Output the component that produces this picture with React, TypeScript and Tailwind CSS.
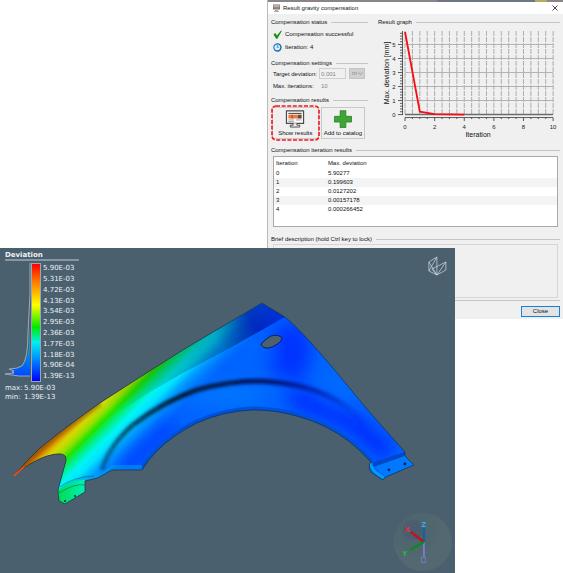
import type { ReactNode } from "react";

const ITERATIONS = [
  { iteration: 0, deviation: "5.90277" },
  { iteration: 1, deviation: "0.199603" },
  { iteration: 2, deviation: "0.0127202" },
  { iteration: 3, deviation: "0.00157178" },
  { iteration: 4, deviation: "0.000266452" },
];

const SCALE_LABELS = [
  "5.90E-03",
  "5.31E-03",
  "4.72E-03",
  "4.13E-03",
  "3.54E-03",
  "2.95E-03",
  "2.36E-03",
  "1.77E-03",
  "1.18E-03",
  "5.90E-04",
  "1.39E-13",
];

const FENDER =
  "M14 476 Q26 461 40 448 Q66 427 100 403 Q140 377 183 350 L262 303 L285 317 Q301 330 333 368 L367 409 L405 452 L405 456 L414 465 L386 477 L383 480 L372 473 Q367 467 371 462 Q360 450 350 442 Q326 424 300 417 Q277 410 253 410 Q224 411 197 423 Q173 435 157 451 Q148 460 142 470 L112 470 L98 478 L85 481 L85 492 L65 504 L59 501 L58 490 L66 461 Q67 455 61 454 Q49 453 30 464 Q21 470 14 476Z";

const ARCH =
  "M371 463 Q360 450 350 442 Q326 424 300 417 Q277 410 253 410 Q224 411 197 423 Q173 435 157 451 Q148 460 142 470";

function SectionTitle({ children }: { children: ReactNode }) {
  return (
    <div className="flex h-[10px] items-center gap-1">
      <h2 className="leading-[10px]">{children}</h2>
      <span className="h-px flex-1 bg-[#c4c4c4]" />
    </div>
  );
}

function ResultGraph() {
  const x = (v: number) => 405 + v * 14.8;
  const y = (v: number) => 114.5 - v * 14;
  const halves = Array.from({ length: 21 }, (_, i) => i / 2);

  return (
    <svg
      viewBox="378 27 182 112"
      className="w-full"
      role="img"
      aria-label="Max. deviation by iteration"
    >
      {halves.map((v) => (
        <path key={v} d={`M${x(v)} 31V114`} stroke="#adadad" strokeWidth="1" strokeDasharray="5 1" />
      ))}
      {[1, 2, 3, 4, 5].map((v) => (
        <path key={v} d={`M405 ${y(v)}H553`} stroke="#b4b4b4" strokeWidth="1" />
      ))}
      <path d="M405 114.5H553" stroke="#6c6c6c" strokeWidth="1.4" />
      <path d="M402.5 31V115M405 117.5H553" stroke="#333" strokeWidth=".8" />
      {Array.from({ length: 30 }, (_, i) => (
        <path
          key={i}
          d={`M${i % 5 === 0 ? 398 : 400} ${y(i / 5)}H402.5`}
          stroke="#333"
          strokeWidth=".8"
        />
      ))}
      {halves.map((v) => (
        <path
          key={v}
          d={`M${x(v)} 117.5V${v % 2 === 0 ? 121 : 119}`}
          stroke="#333"
          strokeWidth=".8"
        />
      ))}
      <polyline
        points={`405,32 ${x(1)},111.7 ${x(2)},114 ${x(4)},114.5`}
        fill="none"
        stroke="#f80c12"
        strokeWidth="1.8"
      />
      <g fill="#222" fontSize="6" textAnchor="middle">
        {[0, 1, 2, 3, 4, 5].map((v) => (
          <text key={v} x="394" y={y(v) + 2}>
            {v}
          </text>
        ))}
        {[0, 2, 4, 6, 8, 10].map((v) => (
          <text key={v} x={x(v)} y="129">
            {v}
          </text>
        ))}
      </g>
      <g fill="#111" fontSize="7" textAnchor="middle">
        <text x="478" y="137">
          Iteration
        </text>
        <text transform="translate(389 73) rotate(-90)">Max. deviation [mm]</text>
      </g>
    </svg>
  );
}

function CompensationDialog() {
  return (
    <section className="ml-auto w-[52.6%] border-l border-[#b9b9b9] bg-[#f0f0f0] font-['Liberation_Sans',sans-serif] text-[6px] leading-[10px] text-[#111]">
      <div className="flex h-[2px] bg-[#8b8585]">
        <span className="ml-auto w-1/3 bg-[#6f7684]" />
        <span className="mr-4 w-3 bg-[#b5aa62]" />
      </div>
      <header className="flex h-3 items-center bg-white pr-[5px] pl-1">
        <svg viewBox="0 0 9 9" className="mr-[2px] size-[9px]">
          <path d="M1 .5h7v5H1z" fill="#797979" />
          <path d="M1.5 1.5h6v1h-6z" fill="#e8e8e8" />
          <path d="M2 3h5v1.5H2z" fill="#b98167" />
          <path d="M3 6h3v1h1v1H2V7h1z" fill="#aaa" />
        </svg>
        <h1 className="leading-3">Result gravity compensation</h1>
        <button type="button" aria-label="Close window" className="ml-auto">
          <svg viewBox="0 0 6 6" className="size-[6px]">
            <path d="M.5.5l5 5M5.5.5l-5 5" stroke="#333" strokeWidth=".9" />
          </svg>
        </button>
      </header>

      <div className="px-[3px] pt-[3px] pb-[2px]">
        <div className="flex gap-[10px]">
          <div className="flex w-[97px] shrink-0 flex-col">
            <SectionTitle>Compensation status</SectionTitle>
            <div className="mt-[2px] flex h-[10px] items-center gap-[3px] pl-[2px]">
              <svg viewBox="0 0 9 9" className="size-[9px]">
                <path d="M.5 4.5L2.2 3 4 5.5 8 .5l.8.5L4.3 8.7H3.2z" fill="#169016" />
              </svg>
              Compensation successful
            </div>
            <div className="mt-[3px] flex h-[10px] items-center gap-[3px] pl-[2px]">
              <svg viewBox="0 0 9 9" className="size-[9px]">
                <circle cx="4.5" cy="4.5" r="4.2" fill="#1b6fb5" />
                <circle cx="4.3" cy="4.3" r="2.9" fill="#d9effc" />
                <path d="M4.3 2v2.5L6 4" fill="none" stroke="#2a7dbd" strokeWidth=".8" />
              </svg>
              Iteration: 4
            </div>

            <div className="mt-[6px]">
              <SectionTitle>Compensation settings</SectionTitle>
            </div>
            <div className="flex h-[11px] items-center pl-[2px]">
              <label htmlFor="target" className="w-[46px] whitespace-nowrap">
                Target deviation:
              </label>
              <input
                id="target"
                disabled
                defaultValue="0.001"
                className="h-[11px] w-[27px] border border-[#cfcfcf] bg-[#f0f0f0] px-px text-[#858585]"
              />
              <select
                aria-label="Unit"
                disabled
                className="ml-[3px] h-[11px] w-4 appearance-none border border-[#c3c3c3] bg-[#d0d0d0] pl-[2px] leading-[9px] text-[#858585]"
              >
                <option>m</option>
              </select>
              <svg viewBox="0 0 5 3" className="-ml-[7px] h-[3px] w-[5px]">
                <path d="M.5.5l2 2 2-2" fill="none" stroke="#888" strokeWidth=".8" />
              </svg>
            </div>
            <div className="mt-[2px] flex h-[10px] items-center pl-[2px]">
              <label htmlFor="iterations" className="w-[46px] whitespace-nowrap">
                Max. iterations:
              </label>
              <input
                id="iterations"
                disabled
                defaultValue="10"
                className="h-[10px] w-[27px] px-[2px] text-[#858585]"
              />
            </div>

            <div className="mt-1">
              <SectionTitle>Compensation results</SectionTitle>
            </div>
            <div className="mt-[2px] flex gap-[2px] pl-px">
              <button
                type="button"
                className="relative flex h-8 w-[47px] flex-col items-center justify-between border border-[#c8c8c8] pt-[2px]"
              >
                <svg viewBox="0 0 20 19" className="h-[19px] w-5">
                  <path d="M1 1h18v13H1z" fill="#fff" stroke="#4b4b4b" strokeWidth="1.3" />
                  <path d="M3 3h14v1.3H3z" fill="#555" />
                  <path d="M3 5h10v4H3z" fill="#f07a3c" />
                  <path d="M13 5h4v4h-4z" fill="#6b4a3c" />
                  <path d="M7 5v4" stroke="#8b3b1c" strokeWidth=".8" />
                  <path d="M3 10.5h6M11 10.5h6M3 12.2h6" stroke="#888" strokeWidth=".8" />
                  <path d="M8 14v2H5v2h10v-2h-3v-2" fill="#eee" stroke="#4b4b4b" />
                </svg>
                <span className="whitespace-nowrap">Show results</span>
                <svg
                  viewBox="0 0 49 36"
                  className="pointer-events-none absolute -top-[3px] -left-[2px] h-9 w-[49px]"
                >
                  <rect
                    x="1"
                    y="1"
                    width="47"
                    height="34"
                    rx="4"
                    fill="none"
                    stroke="#f5141c"
                    strokeWidth="1.6"
                    strokeDasharray="4 1.6"
                  />
                </svg>
              </button>
              <button
                type="button"
                className="flex h-8 w-[44px] flex-col items-center justify-between border border-[#c8c8c8] pt-[2px]"
              >
                <svg viewBox="0 0 20 19" className="h-[19px] w-5">
                  <path
                    d="M7 .7h6v6h6v6h-6v6H7v-6H1v-6h6z"
                    fill="#3fa535"
                    stroke="#287a22"
                    strokeWidth=".8"
                  />
                </svg>
                <span className="whitespace-nowrap">Add to catalog</span>
              </button>
            </div>
          </div>

          <div className="min-w-0 flex-1">
            <SectionTitle>Result graph</SectionTitle>
            <ResultGraph />
          </div>
        </div>

        <div className="mt-[6px]">
          <SectionTitle>Compensation iteration results</SectionTitle>
        </div>
        <div className="mx-[2px] mt-px h-[71px] border border-[#a9a9a9] bg-white">
          <table className="w-full table-fixed text-left">
            <thead>
              <tr className="h-3">
                <th className="w-[54px] pl-[2px] font-normal">Iteration</th>
                <th className="font-normal">Max. deviation</th>
              </tr>
            </thead>
            <tbody className="leading-[9px]">
              {ITERATIONS.map((row) => (
                <tr key={row.iteration} className="even:bg-[#f4f4f4]">
                  <td className="pl-[2px]">{row.iteration}</td>
                  <td>{row.deviation}</td>
                </tr>
              ))}
            </tbody>
          </table>
        </div>

        <div className="mt-[7px]">
          <SectionTitle>Brief description (hold Ctrl key to lock)</SectionTitle>
        </div>
        <div className="mx-[2px] h-[54px] border border-[#d6d6d6]" />
        <div className="mt-[2px] h-px bg-[#c4c4c4]" />
        <div className="mt-[5px] flex justify-end">
          <button
            type="button"
            className="h-[11px] w-[39px] border border-[#1580d8] bg-[#e3e3e3] leading-[9px]"
          >
            Close
          </button>
        </div>
      </div>
    </section>
  );
}

function FenderModel() {
  return (
    <svg viewBox="0 248 455 325" className="absolute inset-0 h-full w-full" aria-hidden="true">
      <defs>
        <linearGradient id="field" gradientUnits="userSpaceOnUse" x1="0" y1="486" x2="52" y2="538">
          <stop offset="0" stopColor="#d05a00" />
          <stop offset=".09" stopColor="#e09000" />
          <stop offset=".19" stopColor="#d8d800" />
          <stop offset=".28" stopColor="#98e000" />
          <stop offset=".37" stopColor="#1ee400" />
          <stop offset=".47" stopColor="#00f08c" />
          <stop offset=".57" stopColor="#00f4f4" />
          <stop offset=".66" stopColor="#00e4ff" />
          <stop offset=".78" stopColor="#00a0ff" />
          <stop offset=".9" stopColor="#0078ff" />
          <stop offset="1" stopColor="#0064ff" />
        </linearGradient>
        <linearGradient id="strip" gradientUnits="userSpaceOnUse" x1="110" y1="410" x2="280" y2="310">
          <stop offset="0" stopColor="#003000" stopOpacity="0" />
          <stop offset=".3" stopColor="#003020" stopOpacity=".2" />
          <stop offset=".65" stopColor="#003060" stopOpacity=".35" />
          <stop offset=".85" stopColor="#0018b0" stopOpacity=".8" />
          <stop offset="1" stopColor="#0028d0" stopOpacity=".8" />
        </linearGradient>
        <linearGradient id="bracket" x1="0" y1="0" x2="1" y2="0">
          <stop offset="0" stopColor="#00dc50" />
          <stop offset="1" stopColor="#00f0b4" />
        </linearGradient>
        <linearGradient id="crease" gradientUnits="userSpaceOnUse" x1="98" y1="0" x2="365" y2="0">
          <stop offset="0" stopColor="#003a60" stopOpacity=".5" />
          <stop offset=".12" stopColor="#003050" stopOpacity=".8" />
          <stop offset=".3" stopColor="#001830" stopOpacity=".95" />
          <stop offset=".65" stopColor="#001060" stopOpacity=".9" />
          <stop offset=".85" stopColor="#0018a0" stopOpacity=".6" />
          <stop offset="1" stopColor="#0020c0" stopOpacity="0" />
        </linearGradient>
        <radialGradient id="ball" cx=".35" cy=".3">
          <stop offset="0" stopColor="#4b5d6e" />
          <stop offset=".35" stopColor="#4c656e" />
          <stop offset="1" stopColor="#546871" />
        </radialGradient>
        <filter id="soft" x="-30%" y="-30%" width="160%" height="160%">
          <feGaussianBlur stdDeviation="9" />
        </filter>
        <filter id="softer" x="-10%" y="-10%" width="120%" height="120%">
          <feGaussianBlur stdDeviation="1.4" />
        </filter>
        <clipPath id="fender">
          <path d={FENDER} />
        </clipPath>
      </defs>

      <g clipPath="url(#fender)">
        <path d={FENDER} fill="url(#field)" />
        <g filter="url(#soft)">
          <ellipse cx="16" cy="474" rx="9" ry="7" fill="#ff2000" />
          <path d="M285 325L295 350 285 378" stroke="#0030ff" strokeWidth="34" fill="none" />
          <ellipse cx="225" cy="395" rx="40" ry="10" fill="#0078ff" />
          <ellipse cx="340" cy="388" rx="20" ry="12" transform="rotate(45 340 388)" fill="#006cff" />
          <path d="M290 396L350 420 390 455" stroke="#0028ff" strokeWidth="18" fill="none" />
          <path d="M122 472L150 444 175 425" stroke="#0030ff" strokeWidth="11" fill="none" />
        </g>
        <path
          d="M98 404L183 350 262 303 285 317 230 348 183 373 150 392 110 418Z"
          fill="url(#strip)"
        />
        <path
          d="M102 470 Q109 446 133 425 Q163 402 197 390 Q228 381 260 381 Q302 383 330 397 Q350 407 365 425"
          fill="none"
          stroke="url(#crease)"
          strokeWidth="5"
          filter="url(#softer)"
        />
        <path
          d="M15 474 Q50 438 100 403"
          fill="none"
          stroke="#402000"
          strokeOpacity=".3"
          strokeWidth="7"
          filter="url(#softer)"
        />
        <path d={ARCH} fill="none" stroke="#0050d8" strokeWidth="7" />
        <path d="M58 490L66 484 85 475 98 475 112 465 142 465V474H112L98 482 85 481Z" fill="#00a8e8" fillOpacity=".45" />
        <path d="M58 490Q75 479 85 480V492L65 504 59 501Z" fill="url(#bracket)" />
        <path d="M60 487Q73 477 94 476M59 493Q75 483 85 485" stroke="#007c70" strokeOpacity=".7" fill="none" />
        <path d="M371 463L405 452V456L374 467Z" fill="#0048c8" />
        <path d="M374 467L405 456 414 465 386 477Z" fill="#0078ff" />
        <path d="M371 463Q370 470 384 478" stroke="#00a0f0" strokeWidth="3" fill="none" />
      </g>
      <path d={FENDER} fill="none" stroke="#102838" strokeOpacity=".75" strokeWidth=".8" />
      <path d="M14 476L24 467" stroke="#ff4a10" strokeWidth="1.6" />
      <path
        d="M262 343Q266 339 271 336Q279 334 282 338Q282 342 276 345Q268 350 263 347Q260 345 262 343Z"
        fill="#4b6170"
        stroke="#071a50"
        strokeWidth=".9"
      />
      <g fill="#04204a">
        <circle cx="65" cy="501" r="1" />
        <circle cx="75" cy="496" r="1" />
        <circle cx="389" cy="470" r="1.4" />
        <circle cx="405" cy="464" r="1.4" />
      </g>

      <g fill="none" stroke="#d3dade" strokeWidth=".7">
        <path d="M429 262L437 257V275L429 271ZM429 262L437 275 446 262V270L437 275 432 269 446 262M437 257L429 271" />
      </g>

      <circle cx="423" cy="542" r="29" fill="url(#ball)" />
      <circle cx="413" cy="530" r="10" fill="#4c5a70" fillOpacity=".6" />
      <path d="M424 542V557" stroke="#7080c0" strokeWidth="2" />
      <rect x="421.5" y="557.5" width="4" height="5" fill="none" stroke="#6c7cba" />
      <path d="M424 542V528" stroke="#15639a" strokeWidth="2.4" />
      <path d="M424 542L411 532" stroke="#c01418" strokeWidth="2.4" />
      <path d="M424 542L410 550" stroke="#0c8a20" strokeWidth="2.4" />
      <g fontSize="7" fontWeight="700" textAnchor="middle">
        <text x="407" y="532" fill="#e0303a">X</text>
        <text x="424" y="527" fill="#38a8e8">Z</text>
        <text x="405" y="556" fill="#28b840">Y</text>
      </g>
    </svg>
  );
}

function DeviationViewer() {
  return (
    <section className="relative -mt-[71px] aspect-[455/325] w-[80.8%] bg-[#4a606f] font-['DejaVu_Sans',sans-serif] text-[7px] text-[#eef2f4]">
      <FenderModel />
      <div className="relative w-[79px] pt-[3px] pl-[5px]">
        <h2 className="h-[10px] border-b-2 border-[#8796a1] leading-[8px] font-bold">Deviation</h2>
        <div className="mt-[2px] flex h-[119px]">
          <svg viewBox="0 0 26 119" className="h-full w-[26px]">
            <defs>
              <linearGradient id="histogram" x1="0" y1="0" x2="0" y2="1">
                <stop offset="0" stopColor="#00e0d0" />
                <stop offset="1" stopColor="#0048ff" />
              </linearGradient>
            </defs>
            <path
              d="M25 65L24 85Q22 98 17 103Q12 106 5 106L10 108 8 109 10 110 0 111 14 113H25Z"
              fill="url(#histogram)"
            />
            <path
              d="M25 0V30L23 70Q23 96 17 103Q12 106 4 106L9 108 7 109 9 110 0 111 14 113H25"
              fill="none"
              stroke="#aebbc4"
              strokeWidth=".8"
            />
          </svg>
          <div className="w-[10px] border border-[#9aa7b0] bg-[linear-gradient(to_bottom,#ff0000_0%,#ff7800_15%,#ffff00_35%,#00e800_54%,#00f0f0_67%,#0080ff_83%,#0000ff_100%)]" />
          <ol className="ml-[2px] grid flex-1 grid-rows-11">
            {SCALE_LABELS.map((label) => (
              <li key={label} className="leading-[11px]">
                {label}
              </li>
            ))}
          </ol>
        </div>
        <dl className="mt-[2px] grid grid-cols-[19px_1fr] leading-[9px] whitespace-nowrap">
          <dt>max:</dt>
          <dd>5.90E-03</dd>
          <dt>min:</dt>
          <dd>1.39E-13</dd>
        </dl>
      </div>
    </section>
  );
}

export default function App() {
  return (
    <main className="min-h-screen overflow-hidden bg-white">
      <CompensationDialog />
      <DeviationViewer />
    </main>
  );
}
